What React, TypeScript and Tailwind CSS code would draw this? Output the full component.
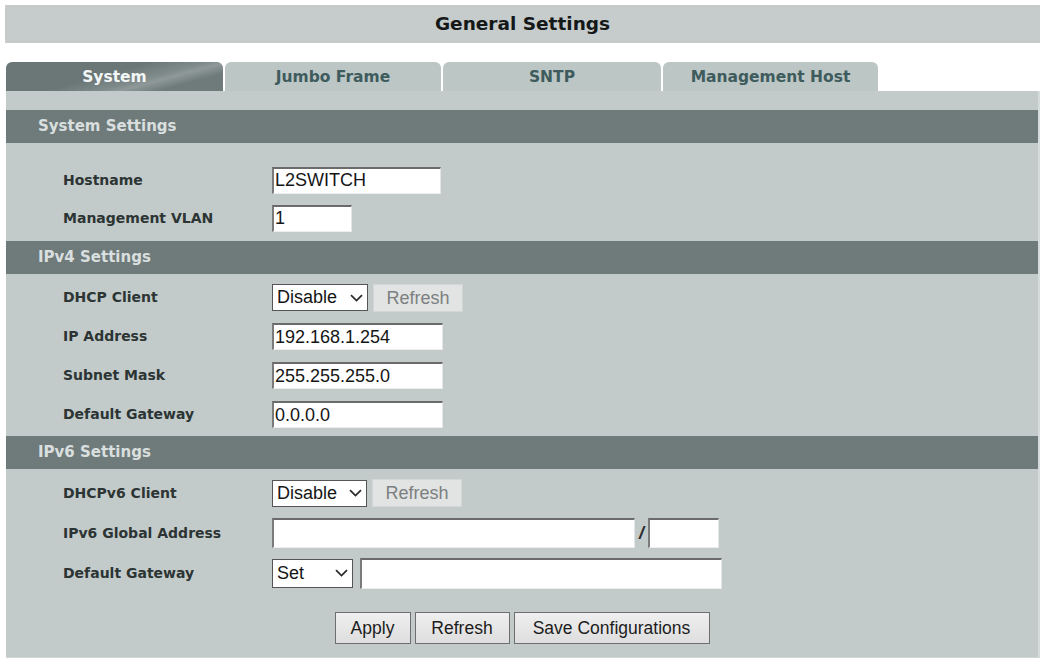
import type { ReactNode } from "react";

const sans = "font-['Liberation_Sans',Arial,sans-serif]";
const wide = "font-['DejaVu_Sans',Verdana,sans-serif]";

const inputCls = `h-[27px] bg-white border-t-2 border-l-2 border-r border-b border-t-[#6b6b6b] border-l-[#7a7a7a] border-r-[#e4e6e6] border-b-[#eceeee] pl-[1px] text-[18px] leading-none text-[#151515] outline-none ${sans}`;

function Chevron() {
  return (
    <svg width="13" height="8" viewBox="0 0 13 8" className="shrink-0">
      <path d="M1 1.2 L6.5 6.6 L12 1.2" fill="none" stroke="#2a2a2a" strokeWidth="1.7" />
    </svg>
  );
}

function Select({ value, className }: { value: string; className: string }) {
  return (
    <div
      className={`flex items-center justify-between border border-[#555] bg-white pl-[4px] pr-[4px] text-[18px] text-[#151515] ${sans} ${className}`}
    >
      <span>{value}</span>
      <Chevron />
    </div>
  );
}

function DisabledButton() {
  return (
    <button
      type="button"
      className={`ml-[5px] h-[28px] w-[90px] border border-[#d3d8d7] bg-[#e1e4e3] text-[18px] text-[#7c8080] ${sans}`}
    >
      Refresh
    </button>
  );
}

function Row({ label, height, children }: { label: string; height: string; children: ReactNode }) {
  return (
    <div className={`flex items-center pl-[57px] ${height}`}>
      <div className={`w-[209px] shrink-0 text-[14px] font-bold text-[#2c3434] ${wide}`}>{label}</div>
      <div className="flex items-center">{children}</div>
    </div>
  );
}

function SectionHeader({ title }: { title: string }) {
  return (
    <div className="flex h-[33px] items-center bg-[#6f7b7a] pl-[32px]">
      <span className={`text-[15px] font-bold text-[#d9dfdf] ${wide}`}>{title}</span>
    </div>
  );
}

const tabs = [
  { name: "System", w: "w-[217px]", active: true },
  { name: "Jumbo Frame", w: "w-[216px]", active: false },
  { name: "SNTP", w: "w-[218px]", active: false },
  { name: "Management Host", w: "w-[215px]", active: false },
];

function ActionButton({ children, w }: { children: ReactNode; w: string }) {
  return (
    <button
      type="button"
      className={`h-[32px] border border-[#6e6e6e] bg-linear-to-b from-[#efefef] to-[#dedede] text-[17.5px] text-[#1c1c1c] ${sans} ${w}`}
    >
      {children}
    </button>
  );
}

export default function App() {
  return (
    <div className="min-h-[665px] w-[1043px] bg-white pt-[5px]">
      <div className="ml-[5px] flex h-[38px] w-[1035px] items-center justify-center bg-[#c6cccc]">
        <h1 className={`text-[18.5px] font-bold text-[#141818] ${wide}`}>General Settings</h1>
      </div>

      <div className="ml-[6px] mt-[19px] w-[1034px]">
        <div className="flex h-[29px] gap-[2px]">
          {tabs.map((t) =>
            t.active ? (
              <div
                key={t.name}
                className={`flex items-center justify-center rounded-t-[6px] bg-[linear-gradient(165deg,#6b7777_45%,#7f8a8a_62%,#8f9999_68%,#6f7b7b_80%)] pt-[2px] text-[15.5px] font-bold text-[#f3f6f6] ${wide} ${t.w}`}
              >
                {t.name}
              </div>
            ) : (
              <div
                key={t.name}
                className={`flex items-center justify-center rounded-t-[6px] bg-[#bcc6c4] pt-[2px] text-[15.5px] font-bold text-[#3e5b5d] ${wide} ${t.w}`}
              >
                {t.name}
              </div>
            )
          )}
        </div>

        <div className="border-r-2 border-b border-r-[#d6dcdc] border-b-[#d2d8d8] bg-[#c3cbca] pb-[13px] pt-[19px]">
          <SectionHeader title="System Settings" />
          <div className="pb-[4px] pt-[18px]">
            <Row label="Hostname" height="h-[38px]">
              <input readOnly value="L2SWITCH" className={`w-[169px] ${inputCls}`} />
            </Row>
            <Row label="Management VLAN" height="h-[38px]">
              <input readOnly value="1" className={`w-[80px] ${inputCls}`} />
            </Row>
          </div>

          <SectionHeader title="IPv4 Settings" />
          <div className="pb-[2px] pt-[4px]">
            <Row label="DHCP Client" height="h-[39px]">
              <Select value="Disable" className="h-[27px] w-[96px]" />
              <DisabledButton />
            </Row>
            <Row label="IP Address" height="h-[39px]">
              <input readOnly value="192.168.1.254" className={`w-[171px] ${inputCls}`} />
            </Row>
            <Row label="Subnet Mask" height="h-[39px]">
              <input readOnly value="255.255.255.0" className={`w-[171px] ${inputCls}`} />
            </Row>
            <Row label="Default Gateway" height="h-[39px]">
              <input readOnly value="0.0.0.0" className={`w-[171px] ${inputCls}`} />
            </Row>
          </div>

          <SectionHeader title="IPv6 Settings" />
          <div className="pt-[4px]">
            <Row label="DHCPv6 Client" height="h-[40px]">
              <Select value="Disable" className="h-[27px] w-[95px]" />
              <DisabledButton />
            </Row>
            <Row label="IPv6 Global Address" height="h-[40px]">
              <input readOnly value="" className={`!h-[30px] w-[363px] ${inputCls}`} />
              <span className={`mx-[4px] text-[18px] font-bold italic text-[#2a2a2a] ${sans}`}>/</span>
              <input readOnly value="" className={`!h-[30px] w-[71px] ${inputCls}`} />
            </Row>
            <Row label="Default Gateway" height="h-[40px]">
              <Select value="Set" className="h-[29px] w-[81px]" />
              <input readOnly value="" className={`ml-[7px] !h-[31px] w-[362px] ${inputCls}`} />
            </Row>
          </div>

          <div className="flex justify-center gap-[4px] pt-[19px]">
            <ActionButton w="w-[76px]">Apply</ActionButton>
            <ActionButton w="w-[95px]">Refresh</ActionButton>
            <ActionButton w="w-[196px]">Save Configurations</ActionButton>
          </div>
        </div>
      </div>
    </div>
  );
}
